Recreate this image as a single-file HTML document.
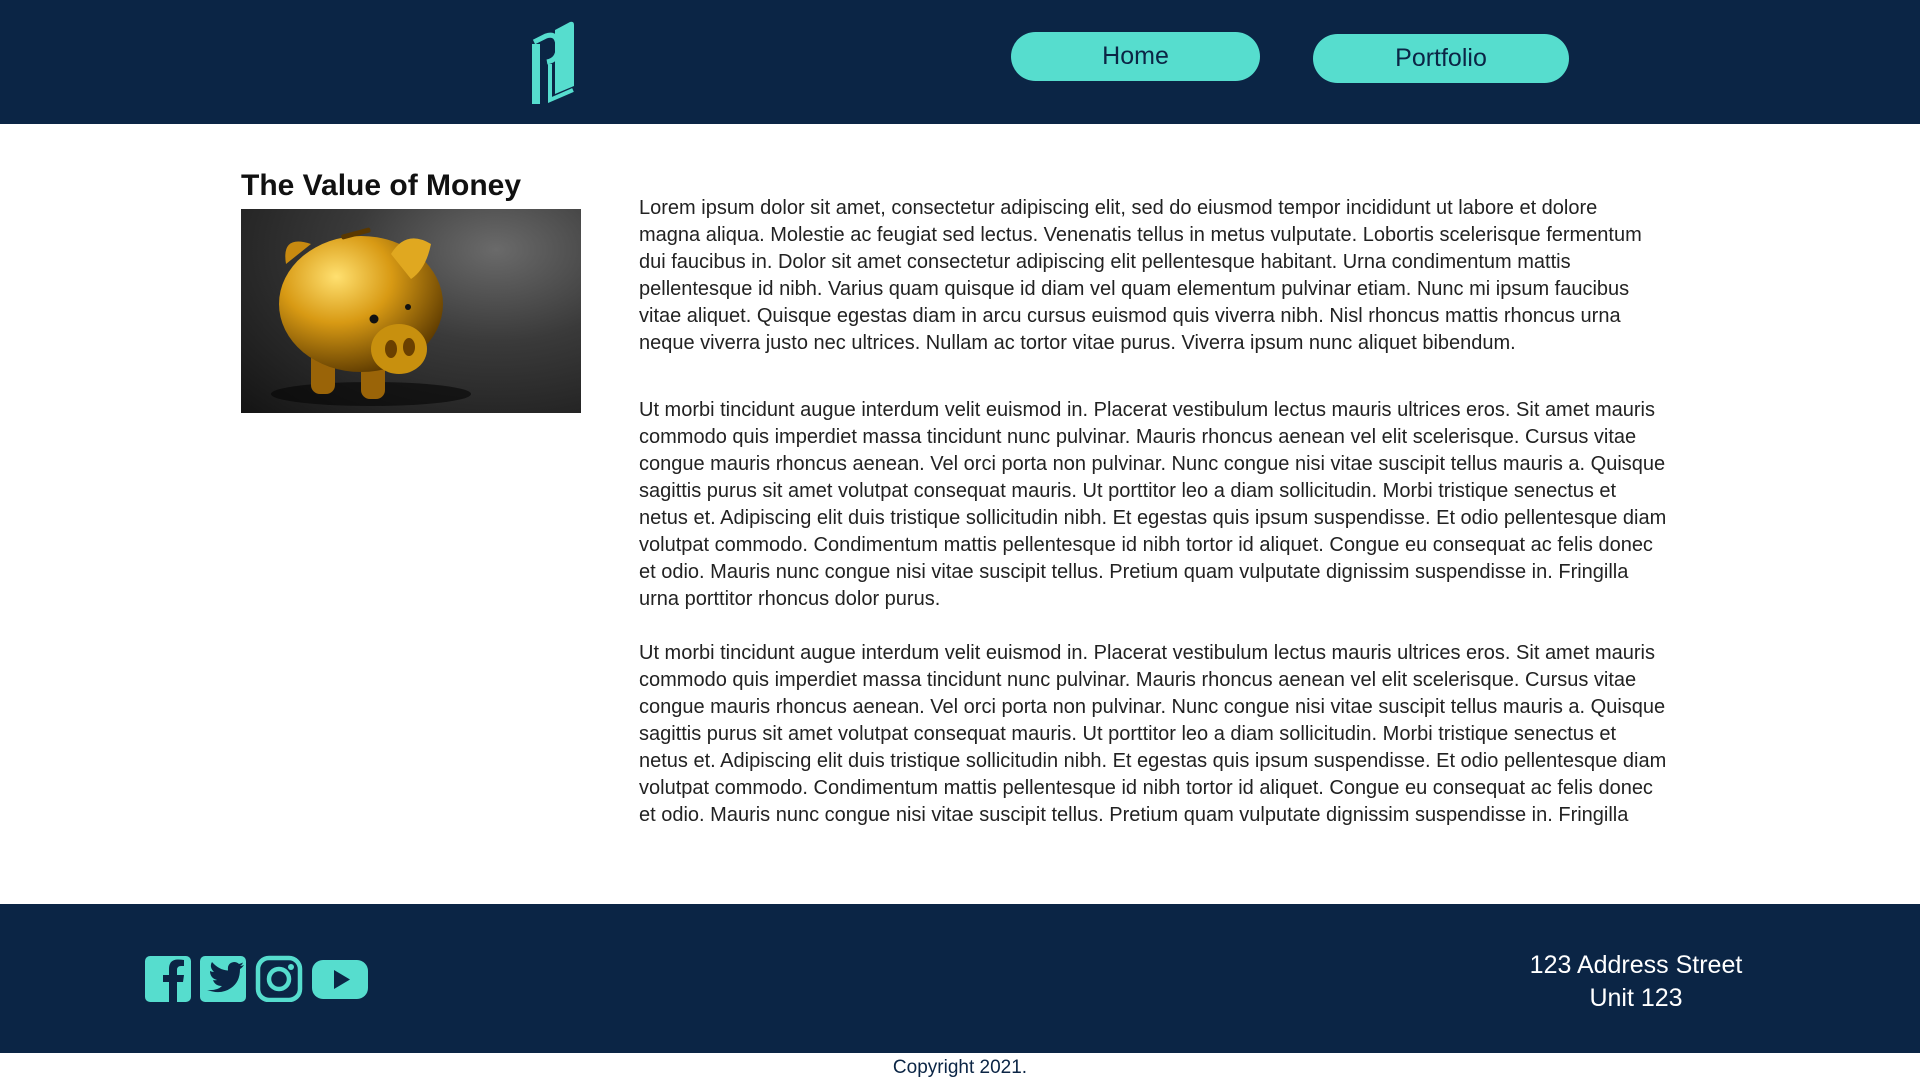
<!DOCTYPE html>
<html><head><meta charset="utf-8"><style>
*{margin:0;padding:0;box-sizing:border-box}
body{width:1920px;height:1080px;overflow:hidden;background:#fff;font-family:"Liberation Sans",sans-serif;color:#111;position:relative}
header{position:absolute;left:0;top:0;width:1920px;height:124px;background:#0b2545}
.btn{position:absolute;top:32px;height:49px;background:#56ddce;border-radius:25px;color:#0b2545;font-size:25px;text-align:center;line-height:49px}
h1{position:absolute;left:241px;top:169px;font-size:30px;font-weight:bold;color:#111}
.img{position:absolute;left:241px;top:209px;width:340px;height:204px;background:radial-gradient(ellipse at 75% 20%,#6a6a6a 0%,#3a3a3a 40%,#141414 100%);overflow:hidden}
.p{position:absolute;left:639px;font-size:20px;line-height:27px;color:#222}
.p div{white-space:nowrap}
footer{position:absolute;left:0;top:904px;width:1920px;height:149px;background:#0b2545}
.addr{position:absolute;left:1480px;width:312px;text-align:center;color:#fff;font-size:25px;line-height:33px}
.copy{position:absolute;top:1057px;width:1920px;text-align:center;font-size:19px;color:#0b2545}
</style></head><body>
<header>
<svg style="position:absolute;left:530px;top:18px" width="46" height="88" viewBox="0 0 46 88">
<path d="M6 26 L6 86" stroke="#56ddce" stroke-width="8" fill="none"/>
<path d="M4 24 L16 18 Q28 14 28 30 Q28 42 17 44" stroke="#56ddce" stroke-width="5" fill="none"/>
<path d="M20 46 L20 82 L43 72" stroke="#56ddce" stroke-width="4" fill="none"/>
<path d="M25 12 L40 4 Q44 3 44 7 L44 68 L25 76 Z" fill="#56ddce"/>
</svg>
<div class="btn" style="left:1011px;width:249px">Home</div>
<div class="btn" style="left:1313px;width:256px;top:34px">Portfolio</div>
</header>
<h1>The Value of Money</h1>
<div class="img">
<svg width="340" height="204" viewBox="0 0 340 204">
<defs><radialGradient id="g" cx="35%" cy="30%" r="75%"><stop offset="0" stop-color="#ffe070"/><stop offset=".45" stop-color="#d89a14"/><stop offset="1" stop-color="#5a3800"/></radialGradient></defs>
<ellipse cx="130" cy="185" rx="100" ry="12" fill="#050505" opacity=".6"/>
<rect x="70" y="130" width="24" height="55" rx="9" fill="#9a6408"/>
<rect x="120" y="140" width="24" height="50" rx="9" fill="#9a6408"/>
<ellipse cx="120" cy="95" rx="82" ry="68" fill="url(#g)"/>
<path d="M150 45 Q165 20 190 35 Q185 60 170 70Z" fill="#e0a820"/>
<path d="M45 55 Q40 25 70 35Z" fill="#c88a10"/>
<ellipse cx="158" cy="140" rx="28" ry="25" fill="#c8900e"/>
<ellipse cx="150" cy="140" rx="6" ry="9" fill="#6a4000"/>
<ellipse cx="168" cy="138" rx="6" ry="9" fill="#6a4000"/>
<circle cx="133" cy="110" r="4.5" fill="#111"/>
<circle cx="167" cy="98" r="3" fill="#111"/>
<rect x="100" y="22" width="30" height="5" rx="2" fill="#5a3800" transform="rotate(-15 115 25)"/>
</svg>
</div>
<div class="p" style="top:195px">
<div>Lorem ipsum dolor sit amet, consectetur adipiscing elit, sed do eiusmod tempor incididunt ut labore et dolore</div>
<div>magna aliqua. Molestie ac feugiat sed lectus. Venenatis tellus in metus vulputate. Lobortis scelerisque fermentum</div>
<div>dui faucibus in. Dolor sit amet consectetur adipiscing elit pellentesque habitant. Urna condimentum mattis</div>
<div>pellentesque id nibh. Varius quam quisque id diam vel quam elementum pulvinar etiam. Nunc mi ipsum faucibus</div>
<div>vitae aliquet. Quisque egestas diam in arcu cursus euismod quis viverra nibh. Nisl rhoncus mattis rhoncus urna</div>
<div>neque viverra justo nec ultrices. Nullam ac tortor vitae purus. Viverra ipsum nunc aliquet bibendum.</div>
</div>
<div class="p" style="top:397px">
<div>Ut morbi tincidunt augue interdum velit euismod in. Placerat vestibulum lectus mauris ultrices eros. Sit amet mauris</div>
<div>commodo quis imperdiet massa tincidunt nunc pulvinar. Mauris rhoncus aenean vel elit scelerisque. Cursus vitae</div>
<div>congue mauris rhoncus aenean. Vel orci porta non pulvinar. Nunc congue nisi vitae suscipit tellus mauris a. Quisque</div>
<div>sagittis purus sit amet volutpat consequat mauris. Ut porttitor leo a diam sollicitudin. Morbi tristique senectus et</div>
<div>netus et. Adipiscing elit duis tristique sollicitudin nibh. Et egestas quis ipsum suspendisse. Et odio pellentesque diam</div>
<div>volutpat commodo. Condimentum mattis pellentesque id nibh tortor id aliquet. Congue eu consequat ac felis donec</div>
<div>et odio. Mauris nunc congue nisi vitae suscipit tellus. Pretium quam vulputate dignissim suspendisse in. Fringilla</div>
<div>urna porttitor rhoncus dolor purus.</div>
</div>
<div class="p" style="top:640px">
<div>Ut morbi tincidunt augue interdum velit euismod in. Placerat vestibulum lectus mauris ultrices eros. Sit amet mauris</div>
<div>commodo quis imperdiet massa tincidunt nunc pulvinar. Mauris rhoncus aenean vel elit scelerisque. Cursus vitae</div>
<div>congue mauris rhoncus aenean. Vel orci porta non pulvinar. Nunc congue nisi vitae suscipit tellus mauris a. Quisque</div>
<div>sagittis purus sit amet volutpat consequat mauris. Ut porttitor leo a diam sollicitudin. Morbi tristique senectus et</div>
<div>netus et. Adipiscing elit duis tristique sollicitudin nibh. Et egestas quis ipsum suspendisse. Et odio pellentesque diam</div>
<div>volutpat commodo. Condimentum mattis pellentesque id nibh tortor id aliquet. Congue eu consequat ac felis donec</div>
<div>et odio. Mauris nunc congue nisi vitae suscipit tellus. Pretium quam vulputate dignissim suspendisse in. Fringilla</div>
</div>
<footer>
<svg style="position:absolute;left:145px;top:51px" width="226" height="47" viewBox="0 0 226 47">
<rect x="0" y="1" width="46" height="46" rx="5" fill="#56ddce"/>
<path d="M32 47 V27 H38 L39 20 H32 V15 Q32 11 36 11 H39 V5 Q36 4.5 33 4.5 Q24 4.5 24 14 V20 H18 V27 H24 V47Z" fill="#0b2545"/>
<rect x="55" y="1" width="46" height="46" rx="5" fill="#56ddce"/>
<path d="M62 35 Q72 36 77 31 Q70 31 68 25 Q70 25.5 72 25 Q65 23 65 16 Q67 17 69 17 Q64 12 67 7 Q74 15 83 15.5 Q82 8 89 7 Q92 7 94 9 Q96 8.5 98 7.5 Q97 10 95 11 Q97 11 99 10 Q97 13 95 14 Q95 27 86 33 Q76 40 62 35Z" fill="#0b2545"/>
<rect x="113" y="3" width="42" height="42" rx="11" fill="none" stroke="#56ddce" stroke-width="4.5"/>
<circle cx="134" cy="24" r="10" fill="none" stroke="#56ddce" stroke-width="4.5"/>
<circle cx="146" cy="12" r="3" fill="#56ddce"/>
<rect x="167" y="5" width="56" height="39" rx="11" fill="#56ddce"/>
<path d="M189 15 L189 34 L205 24.5Z" fill="#0b2545"/>
</svg>
<div class="addr" style="top:45px">123 Address Street<br>Unit 123</div>
</footer>
<div class="copy">Copyright 2021.</div>
</body></html>
